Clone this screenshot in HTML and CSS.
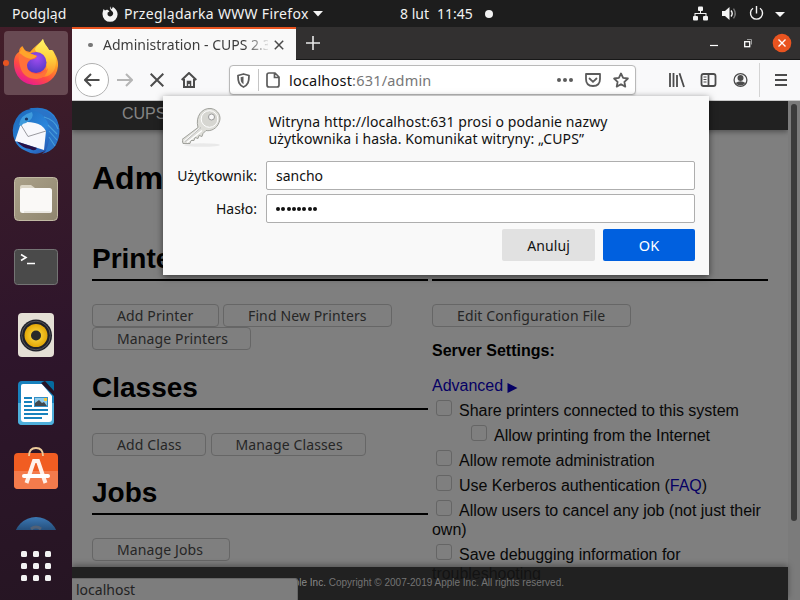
FILE: index.html
```html
<!DOCTYPE html>
<html lang="pl">
<head>
<meta charset="utf-8">
<title>Administration - CUPS</title>
<link rel="stylesheet" href="styles.css">
</head>
<body>
<div class="desktop">
  <header class="topbar">
    <span class="activities">Podgląd</span>
    <svg class="appicon" width="16" height="16" viewBox="0 0 16 16"><path d="M8 .2C8.600 1.200 9 2 9 3.100C11 2.700 10.500 1 10.700.8C13.500 2.500 15.600 5 15.600 8.300A7.500 7.500 0 0 1 .5 8.300C.5 6.500 1 5 1.600 3L3 4.500C4 3.700 5 3.700 6 4L7.500 5.500L5.700 6.500C5 8.500 6 10.400 8 10.400A3 3 0 0 0 10.800 6C9 4 7.400 3 8 .2Z" fill="#f4f4f4"/></svg>
    <span class="appname">Przeglądarka WWW Firefox</span>
    <svg class="caret" width="10" height="6" viewBox="0 0 10 6"><path d="M0 0h10L5 5.500z" fill="#f4f4f4"/></svg>
    <span class="date">8 lut</span><span class="time">11:45</span><i class="dot"></i>
    <svg class="tray" width="94" height="18" viewBox="0 0 94 18"><g fill="#f4f4f4"><rect x="6" y="1.500" width="5" height="4.500" rx="1"/><rect x="1" y="11" width="5" height="4.500" rx="1"/><rect x="11" y="11" width="5" height="4.500" rx="1"/><path d="M8 5h1v3h5.500v3h-1V9h-10v2h-1V8H8z"/><path d="M30 6h3l4.500-4v13L33 11h-3z"/><path d="M83 7h10l-5 5z"/></g><g fill="none" stroke="#f4f4f4" stroke-width="1.400"><path d="M39 5.500q2.400 3 0 6"/><path d="M41.500 3.700q3.500 5 0 9.600" stroke="#777"/><path d="M61 3.300a6 6 0 1 0 7 0M64.500 1v7.500"/></g></svg>
  </header>

  <nav class="dock">
    <svg class="app" viewBox="0 0 64 68">
      <defs>
        <linearGradient id="fx" x1=".8" y1="0" x2=".25" y2="1"><stop offset="0" stop-color="#fff44f"/><stop offset=".4" stop-color="#ff9a22"/><stop offset=".7" stop-color="#ff4a43"/><stop offset="1" stop-color="#e5149b"/></linearGradient>
        <radialGradient id="fp" cx=".55" cy=".3" r=".7"><stop offset="0" stop-color="#a24cf0"/><stop offset="1" stop-color="#5139c4"/></radialGradient>
        <linearGradient id="fy" x1="0" y1="0" x2="0" y2="1"><stop offset="0" stop-color="#fff36a"/><stop offset=".5" stop-color="#ffd23c"/><stop offset="1" stop-color="#ff8a2a"/></linearGradient>
        <linearGradient id="tb" x1="0" y1="0" x2="1" y2="1"><stop offset="0" stop-color="#1b64b5"/><stop offset=".55" stop-color="#2b86dc"/><stop offset="1" stop-color="#23409c"/></linearGradient>
        <linearGradient id="fo" x1="0" y1="0" x2="1" y2="1"><stop offset="0" stop-color="#aaa189"/><stop offset="1" stop-color="#90866f"/></linearGradient>
        <radialGradient id="rb"><stop offset="0" stop-color="#ffe14b"/><stop offset="1" stop-color="#e2a707"/></radialGradient>
        <linearGradient id="hp" x1="0" y1="0" x2="0" y2="1"><stop offset="0" stop-color="#3b78b4"/><stop offset=".5" stop-color="#173356"/></linearGradient>
      </defs>
      <rect x="0" y="2" width="64" height="64" rx="4" fill="#684a53"/>
      <path d="M18.500 17C19 19 20 20.500 22 22L26 23C30 18 35 15 39 10C40 15 43 17 45 21L49 21.500C52 27 54.500 31 54 37C53 49 43.500 56 32 56C19 56 10 47 10 34C10 28 12 25 15 23C15 20 16.500 18 18.500 17Z" fill="url(#fx)"/>
      <path d="M39 10C40 15 43 17 45 21L48 21C52 27 53 33 51 39C49 45 44 48 38 48C44 43 43 35 41 30C38 24 31 24 31 20C33 16 37 14 39 10Z" fill="url(#fy)"/>
      <circle cx="32" cy="33.500" r="10.500" fill="url(#fp)"/>
      <path d="M15 23Q21 20 25 24L33 27Q32 30 28 30.500Q24 31 23 36Q23 44 32 45Q40 45 44 39Q43 49 33 50Q19 50 16 37Q14 29 15 23Z" fill="#ff7139"/>
      <path d="M15 24L19 18Q20 22 25 24L33 27Q31 29 27 30Q21 29 17 25Z" fill="#ffa52b"/>
    </svg>
    <svg class="app" viewBox="0 0 64 68">
      <path d="M25 11L29 11Q42 9 50 18Q58 28 54 42Q50 54 38 57L42 53Q32 60 22 54Q14 51 11 44Q6 33 12 22Q17 13 27 12Z" fill="url(#tb)"/>
      <path d="M11 44L17 26Q22 24 31 26Q38 27 42 34L40 53Z" fill="#f8f8fc"/>
      <path d="M17 28L24 39.500L42 34" fill="none" stroke="#9a9aa0" stroke-width="1"/>
      <path d="M28 13Q38 15 43 24Q47 31 46 40Q44 49 41 56Q51 53 54 43Q58 31 51 21Q44 11 28 13Z" fill="#2a74c8"/>
      <path d="M40 20Q51 23 54 32M44 28L53 37M45 34L53 43M45 40L51 49" stroke="#56b0e2" stroke-width="1.100" fill="none" opacity=".7"/>
      <path d="M15 28Q16 18 28 15Q31 21 22 26Q19 26 17 29Z" fill="#3f9bdc"/><circle cx="22.500" cy="22" r="1.600" fill="#153667"/>
      <path d="M13 44.500L33 51Q31 55 26 52Q18 51 13 44.500" fill="#2a1145"/>
    </svg>
    <svg class="app" viewBox="0 0 64 68">
      <rect x="10.500" y="12.500" width="43" height="43" rx="4" fill="url(#fo)" stroke="#c1b9a3"/>
      <path d="M16 22q0-2 2-2h9l4 3h1v5H16z" fill="#dcd6c6"/><rect x="16" y="23" width="32" height="25" rx="2.500" fill="#faf9f7"/>
      <path d="M20 47h26" stroke="#ddd8cf"/>
    </svg>
    <svg class="app" viewBox="0 0 64 68">
      <rect x="10.500" y="16.500" width="43" height="35" rx="3" fill="#4a4a4a" stroke="#747474"/>
      <path d="M17 21.500L22 24.500L17 27.500M23 30.500h8" fill="none" stroke="#fff" stroke-width="1.600"/>
    </svg>
    <svg class="app" viewBox="0 0 64 68">
      <rect x="14" y="12" width="36" height="44" rx="4" fill="#e4dfd5"/>
      <circle cx="32" cy="34.500" r="16" fill="#20222a"/><circle cx="32" cy="34.500" r="14.300" fill="none" stroke="#54545a"/>
      <circle cx="32" cy="34.500" r="11.500" fill="url(#rb)"/><circle cx="32" cy="34.500" r="5" fill="#292929"/>
    </svg>
    <svg class="app" viewBox="0 0 64 68">
      <path d="M18 12h23l9 10v30q0 4-4 4H18q-4 0-4-4V16q0-4 4-4z" fill="#1881bd"/>
      <path d="M14 34h36v18q0 4-4 4H18q-4 0-4-4z" fill="#4fafdb"/>
      <path d="M19 15h19l10 12v23q0 3-3 3H20q-3 0-3-3V17q0-2 2-2z" fill="#fff"/>
      <path d="M38 12h10q2 0 2 2v9z" fill="#056b9f"/><path d="M37 14L50 27V22L41 12z" fill="#251425"/>
      <path d="M20 29h8M20 33h8M20 37h8M20 41h24M20 45h24M20 49h18" stroke="#1782bd" stroke-width="2"/>
      <rect x="30" y="28" width="14" height="10" fill="#3390c7"/><rect x="31" y="29" width="12" height="8" fill="#8fcbea"/><path d="M31 37v-3l4-3 3 3 2-1 3 4z" fill="#41484c"/><rect x="40" y="29" width="3" height="3" fill="#f3c83d"/>
    </svg>
    <svg class="app" viewBox="0 0 64 68">
      <rect x="10" y="16" width="44" height="36" rx="4" fill="#f15d22"/><path d="M10 34h44v14q0 4-4 4H14q-4 0-4-4z" fill="#f47b4c"/>
      <path d="M25 19q0-8 7-8t7 8" fill="none" stroke="#eccb9a" stroke-width="1.800"/>
      <path d="M22.500 46L30 24h4L41.500 46" fill="none" stroke="#fff1ea" stroke-width="4"/><path d="M20 39h24" stroke="#fff" stroke-width="4" stroke-linecap="round"/>
    </svg>
    <svg class="app last" viewBox="0 0 64 25">
      <circle cx="32" cy="34" r="22" fill="url(#hp)"/><path d="M27 24q5-4 10 0" fill="none" stroke="#526176" stroke-width="3"/>
    </svg>
    <div class="apps"><i></i><i></i><i></i><i></i><i></i><i></i><i></i><i></i><i></i></div>
  </nav>

  <main class="window">
    <div class="tabstrip">
      <div class="tab"><i class="loading"></i><span class="tabtitle">Administration - CUPS 2.3</span>
        <svg class="tabclose" width="10" height="10" viewBox="0 0 10 10"><path d="M.8.8l8.400 8.400M9.200.8L.8 9.200" stroke="#4a4a4a" stroke-width="1.500"/></svg></div>
      <svg class="newtab" width="14" height="14" viewBox="0 0 14 14"><path d="M7 0v14M0 7h14" stroke="#e8e8e8" stroke-width="1.600"/></svg>
      <svg class="wincontrols" width="84" height="20" viewBox="0 0 84 20"><path d="M0 12.500h8" stroke="#fff" stroke-width="1.200"/><path d="M37 6.500h4.500v5" fill="none" stroke="#999"/><rect x="34.700" y="8.700" width="5" height="5" fill="none" stroke="#fff" stroke-width="1.300"/><circle cx="72" cy="10" r="9.300" fill="#e95420"/><path d="M68.500 6.500l7 7M75.500 6.500l-7 7" stroke="#fff" stroke-width="1.400"/></svg>
    </div>
    <div class="toolbar">
      <span class="back"><svg width="16" height="14" viewBox="0 0 16 14"><path d="M15.500 7H1.500M7 1L1 7l6 6" fill="none" stroke="#4c4c4c" stroke-width="2"/></svg></span>
      <svg class="fwd" width="16" height="14" viewBox="0 0 16 14"><path d="M0 7h14.500M9 1l6 6-6 6" fill="none" stroke="#b5b5b5" stroke-width="2"/></svg>
      <svg class="stop" width="14" height="14" viewBox="0 0 14 14"><path d="M.7.7l12.600 12.600M13.300.7L.7 13.300" stroke="#4c4c4c" stroke-width="2"/></svg>
      <svg class="home" width="16" height="16" viewBox="0 0 16 16"><path d="M.7 8L8 1l7.300 7M3 7v8h10V7" fill="none" stroke="#4c4c4c" stroke-width="2"/><path d="M6.500 15v-5.500h3V15M8 9v3" fill="none" stroke="#4c4c4c" stroke-width="1.500"/></svg>
      <div class="urlbar">
        <svg class="shield" width="13" height="15" viewBox="0 0 13 15"><path d="M6.500 1L12 2.500C12 9 11 12 6.500 14C2 12 1 9 1 2.500z" fill="none" stroke="#5c5c5c" stroke-width="1.800" stroke-linejoin="round"/><path d="M6.500 3.500v7.700C4 10 3.600 8 3.600 4.300z" fill="#5c5c5c"/></svg>
        <i class="sep"></i>
        <svg class="page" width="14" height="16" viewBox="0 0 14 16"><path d="M3 1h6l4 4v8q0 2-2 2H3q-2 0-2-2V3q0-2 2-2zM8.500 1v4.500H13" fill="none" stroke="#5c5c5c" stroke-width="1.700"/></svg>
        <span class="url"><b>localhost</b>:631/admin</span>
        <svg class="urlicons" width="72" height="16" viewBox="0 0 72 16"><g fill="#5c5c5c"><circle cx="2" cy="8" r="2"/><circle cx="8" cy="8" r="2"/><circle cx="14" cy="8" r="2"/></g><g fill="none" stroke="#5c5c5c" stroke-width="1.800"><path d="M29 2h14v5q0 7-7 7t-7-7z" stroke-linejoin="round"/><path d="M32.500 6.500L36 9.800l3.500-3.300" stroke-linecap="round"/><path d="M64 1.500l2.100 4.400 4.800.6-3.500 3.300.9 4.800-4.300-2.400-4.300 2.400.9-4.800-3.500-3.300 4.800-.6z" stroke-linejoin="round"/></g></svg>
      </div>
      <svg class="tools" width="120" height="34" viewBox="0 0 120 34"><g fill="none" stroke="#4c4c4c" stroke-width="1.800"><path d="M2 10v14M5.500 10v14M9 12v12M11.500 10.300L16 24" /><rect x="33.500" y="11" width="14" height="12" rx="2"/><path d="M40.500 11v12"/><path d="M35.500 14h3M35.500 16.500h3M35.500 19h3" stroke-width="1"/><circle cx="72.500" cy="17" r="6.400" stroke-width="1.300"/><path d="M107 12h12M107 17h12M107 22h12" stroke-width="2"/></g><circle cx="72.500" cy="15" r="3" fill="#4c4c4c"/><path d="M67.500 20q5-3.500 10 0q-5 5-10 0" fill="#4c4c4c"/><path d="M91.500 0v34" stroke="#d4d4d4"/></svg>
    </div>

    <div class="content">
      <div class="cupsbar">CUPS.org</div>
      <div class="pagebody">
        <h1>Administration</h1>
        <div class="columns">
          <section class="left">
            <h2>Printers</h2>
            <div class="buttons"><span class="btn b127">Add Printer</span><span class="btn b169">Find New Printers</span><span class="btn b159">Manage Printers</span></div>
            <h2 class="classes">Classes</h2>
            <div class="buttons wide"><span class="btn b114">Add Class</span><span class="btn b155">Manage Classes</span></div>
            <h2 class="jobs">Jobs</h2>
            <div class="buttons"><span class="btn b138">Manage Jobs</span></div>
          </section>
          <section class="right">
            <h2>Server</h2>
            <div class="buttons"><span class="btn b199">Edit Configuration File</span></div>
            <h3>Server Settings:</h3>
            <div class="adv">Advanced <svg width="11" height="10" viewBox="0 0 11 10"><path d="M.5 0L10.500 5L.5 10z" fill="#050064"/></svg></div>
            <div class="opt"><i class="cb"></i>Share printers connected to this system</div>
            <div class="opt sub"><i class="cb"></i>Allow printing from the Internet</div>
            <div class="opt"><i class="cb"></i>Allow remote administration</div>
            <div class="opt"><i class="cb"></i>Use Kerberos authentication (<a>FAQ</a>)</div>
            <div class="opt two"><i class="cb"></i>Allow users to cancel any job (not just their own)</div>
            <div class="opt two"><i class="cb"></i>Save debugging information for troubleshooting</div>
          </section>
        </div>
      </div>
      <footer class="foot"><p><b>CUPS and the CUPS logo are trademarks of Apple Inc.</b> <span>Copyright © 2007-2019 Apple Inc. All rights reserved.</span></p></footer>
      <div class="scroll"><i></i></div>
      <div class="status">localhost</div>
    </div>
  </main>

  <div class="dialog">
    <div class="message">
      <svg class="key" width="42" height="42" viewBox="0 0 42 42"><ellipse cx="20" cy="38" rx="18" ry="1.800" fill="#e9e9e9"/><g transform="translate(-1 -.5)"><path d="M17 21C14 10 21 1 30 2C37 3 41 10 38 16C36 22 30 25 25 24L22 27L21 30L18 29L17 32L14 31L13 34L10 34L9 37H2L1 33z" fill="#deded9" stroke="#999a94" stroke-width=".9"/><path d="M18.800 21.800L3.500 34.500M21 24L6 36" stroke="#fff" stroke-width="1.400"/><path d="M20 21L4 35" stroke="#aaa" stroke-width=".8"/><circle cx="28.500" cy="12.500" r="8.300" fill="#d6d6d1" stroke="#fff"/><circle cx="30.500" cy="10.500" r="3" fill="#f8f8f8" stroke="#999"/></g></svg>
      <p><span class="m1">Witryna http://localhost:631 prosi o podanie nazwy</span><br><span class="m2">użytkownika i hasła. Komunikat witryny: „CUPS”</span></p>
    </div>
    <div class="row"><label>Użytkownik:</label><span class="input">sancho</span></div>
    <div class="row"><label>Hasło:</label><span class="input dots"><i></i><i></i><i></i><i></i><i></i><i></i><i></i><i></i></span></div>
    <div class="actions"><span class="cancel">Anuluj</span><span class="ok">OK</span></div>
  </div>
</div>
</body>
</html>
```

FILE: styles.css
```css
* { box-sizing: border-box; }
body, h1, h2, h3, p { margin: 0; }
svg { display: block; flex: none; }
body { width: 800px; height: 600px; overflow: hidden; font-family: "Noto Sans", "Open Sans", sans-serif; font-size: 14px; }
.desktop { position: relative; width: 800px; height: 600px; display: grid; grid-template: 27px 573px / 72px 728px; overflow: hidden; }
.topbar { grid-column: 1 / 3; background: #1d1d1d; color: #f2f2f2; display: flex; align-items: center; white-space: nowrap; padding-left: 12px; }
.activities { width: 90px; }
.appicon { margin-right: 6px; }
.appname { width: 184px; letter-spacing: .3px; }
.caret { margin-left: 5px; }
.date { margin-left: 77px; width: 37px; }
.time { width: 36px; }
.dot { width: 8px; height: 8px; border-radius: 50%; background: #f2f2f2; margin-left: 12px; }
.tray { margin-left: 199px; }

.dock { position: relative; background: linear-gradient(170deg, #431d29 0, #371a2a 25%, #2e152b 55%, #261523 100%); display: flex; flex-direction: column; align-items: center; padding-top: 2px; }
.dock::before { content: ""; position: absolute; left: 4px; top: 33px; width: 6px; height: 6px; margin-left: -1px; border-radius: 50%; background: #e95420; z-index: 1; }
.app { width: 64px; height: 68px; }
svg.last { height: 25px; }
.apps { display: grid; grid-template-columns: repeat(3, 6px); gap: 6px; margin-top: 21px; }
.apps i { width: 6px; height: 6px; border-radius: 1.500px; background: #f3f3f3; }

.window { display: grid; grid-template-rows: 33px 41px 499px; background: #f9f9fa; min-width: 0; }
.tabstrip { background: #323030; border-bottom: 1px solid #181818; display: flex; align-items: center; }
.tab { width: 224px; height: 33px; align-self: flex-start; background: #f9f9f9; border-top: 2px solid #e95420; display: flex; align-items: center; color: #3c3c3c; }
.loading { width: 5px; height: 4px; border-radius: 2px; background: #777; margin: 0 10px 0 16px; }
.tabtitle { width: 165px; white-space: nowrap; overflow: hidden; -webkit-mask-image: linear-gradient(90deg, #000 142px, transparent 168px); }
.tabclose { margin-left: 6px; }
.newtab { margin-left: 10px; }
.wincontrols { margin-left: 390px; }
.toolbar { display: flex; align-items: center; border-bottom: 1px solid #c9c9c9; padding-left: 3px; }
.back { width: 34px; height: 34px; border: 1px solid #b1b1b1; border-radius: 50%; background: #fff; display: flex; align-items: center; justify-content: center; }
.fwd { margin-left: 8px; }
.stop { margin-left: 17px; }
.home { margin-left: 17px; }
.urlbar { width: 407px; height: 30px; border: 1px solid #b9b9b9; border-radius: 4px; background: #fff; margin-left: 32px; display: flex; align-items: center; padding-left: 7px; box-shadow: 0 1px 2px #ddd; }
.sep { width: 1px; height: 22px; background: #c5c5c5; margin: 0 7px 0 8px; }
.url { margin-left: 9px; width: 268px; color: #777; white-space: nowrap; font-size: 14.500px; letter-spacing: .2px; }
.url b { color: #111; font-weight: 400; }
.tools { margin-left: 32px; }

.content { position: relative; background: #7f7f7f; overflow: hidden; display: grid; grid-template: 29px 437px 33px / 716px 12px; font-family: "Liberation Sans", Arial, sans-serif; font-size: 16px; color: #080808; }
.cupsbar { background: #212121; color: #858585; padding-left: 50px; line-height: 26px; box-shadow: 0 2px 5px rgba(0,0,0,.35); }
.pagebody { padding: 27px 20px 0; height: 437px; overflow: visible; grid-column: 1; grid-row: 2; }
h1 { font-size: 32px; line-height: 42px; color: #000; }
.columns { display: grid; grid-template-columns: 336px 336px; gap: 4px; margin-top: 40px; }
h2 { font-size: 28px; line-height: 40px; height: 42px; border-bottom: 2px solid #000; margin-bottom: 23px; color: #000; }
.classes { margin-top: 18px; }
.jobs { margin-top: 17px; }
.buttons { display: flex; flex-wrap: wrap; column-gap: 4px; }
.wide { column-gap: 5px; }
.btn { height: 23px; border: 1px solid #666; border-radius: 4px; font: 14px/21px "Noto Sans", sans-serif; letter-spacing: .12px; color: #262626; padding-left: 24px; white-space: nowrap; }
.b127 { width: 127px; } .b169 { width: 169px; } .b159 { width: 159px; }
.b114 { width: 114px; } .b155 { width: 155px; } .b138 { width: 138px; } .b199 { width: 199px; }
.b155 { padding-left: 23.500px; }
h3 { font-size: 16px; line-height: 20px; margin-top: 14px; color: #000; }
.adv { color: #050064; line-height: 20px; margin-top: 15px; display: flex; gap: 4px; align-items: center; }
.adv svg { margin-top: 3px; }
.opt { min-height: 25px; line-height: 19px; padding-top: 5px; letter-spacing: -.03px; }
.opt a { color: #050064; }
.two { min-height: 44px; }
.sub { padding-left: 35px; }
.cb { display: inline-block; width: 16px; height: 16px; border: 1px solid #656565; border-radius: 3px; margin: -1px 7px 0 4px; vertical-align: top; }
.foot { grid-column: 1; grid-row: 3; position: relative; background: rgba(20,20,20,.88); color: #747474; font-size: 10px; box-shadow: 0 -2px 6px rgba(0,0,0,.35); display: flex; justify-content: flex-end; padding-right: 224px; }
.foot p { line-height: 31px; white-space: nowrap; }
.foot b { color: #8a8a8a; font-weight: 400; }
.scroll { grid-column: 2; grid-row: 1 / 4; background: #7b7b7b; padding: 3px 0 0 3px; }
.scroll i { display: block; width: 6px; height: 417px; border-radius: 3px; background: #3b3b3b; }
.status { position: absolute; left: 0; bottom: 0; width: 226px; height: 22px; background: #7d7d7d; border: 1px solid #686868; border-left: 0; border-bottom: 0; border-radius: 0 3px 0 0; padding-left: 4px; font: 14px/21px "Noto Sans", sans-serif; color: #222; }

.dialog { position: absolute; left: 163px; top: 96px; width: 546px; height: 179px; background: #f9f9f9; box-shadow: 0 2px 7px rgba(0,0,0,.55); color: #111; padding: 11px 14px 14px; }
.message { display: flex; height: 54px; }
.message .key { margin-left: 5px; }
.message p { margin: 6px 0 0 44.500px; line-height: 17px; white-space: nowrap; letter-spacing: .1px; }
.row { display: flex; height: 29px; margin-bottom: 4px; align-items: center; }
.row label { width: 80px; text-align: right; margin-right: 9px; white-space: nowrap; letter-spacing: .05px; }
.input { width: 429px; height: 29px; border: 1px solid #aeaeae; border-radius: 2px; background: #fff; padding-left: 9px; line-height: 27px; }
.dots { display: flex; align-items: center; gap: 1.300px; }
.dots i { width: 4px; height: 4px; border-radius: 50%; background: #111; }
.actions { display: flex; justify-content: flex-end; gap: 8px; margin-top: 6px; letter-spacing: .1px; }
.actions span { width: 93px; height: 32px; line-height: 33px; text-align: center; border-radius: 2px; background: #e1e1e1; }
.actions .ok { width: 92px; background: #0060df; color: #fff; font-size: 14.500px; }
```
